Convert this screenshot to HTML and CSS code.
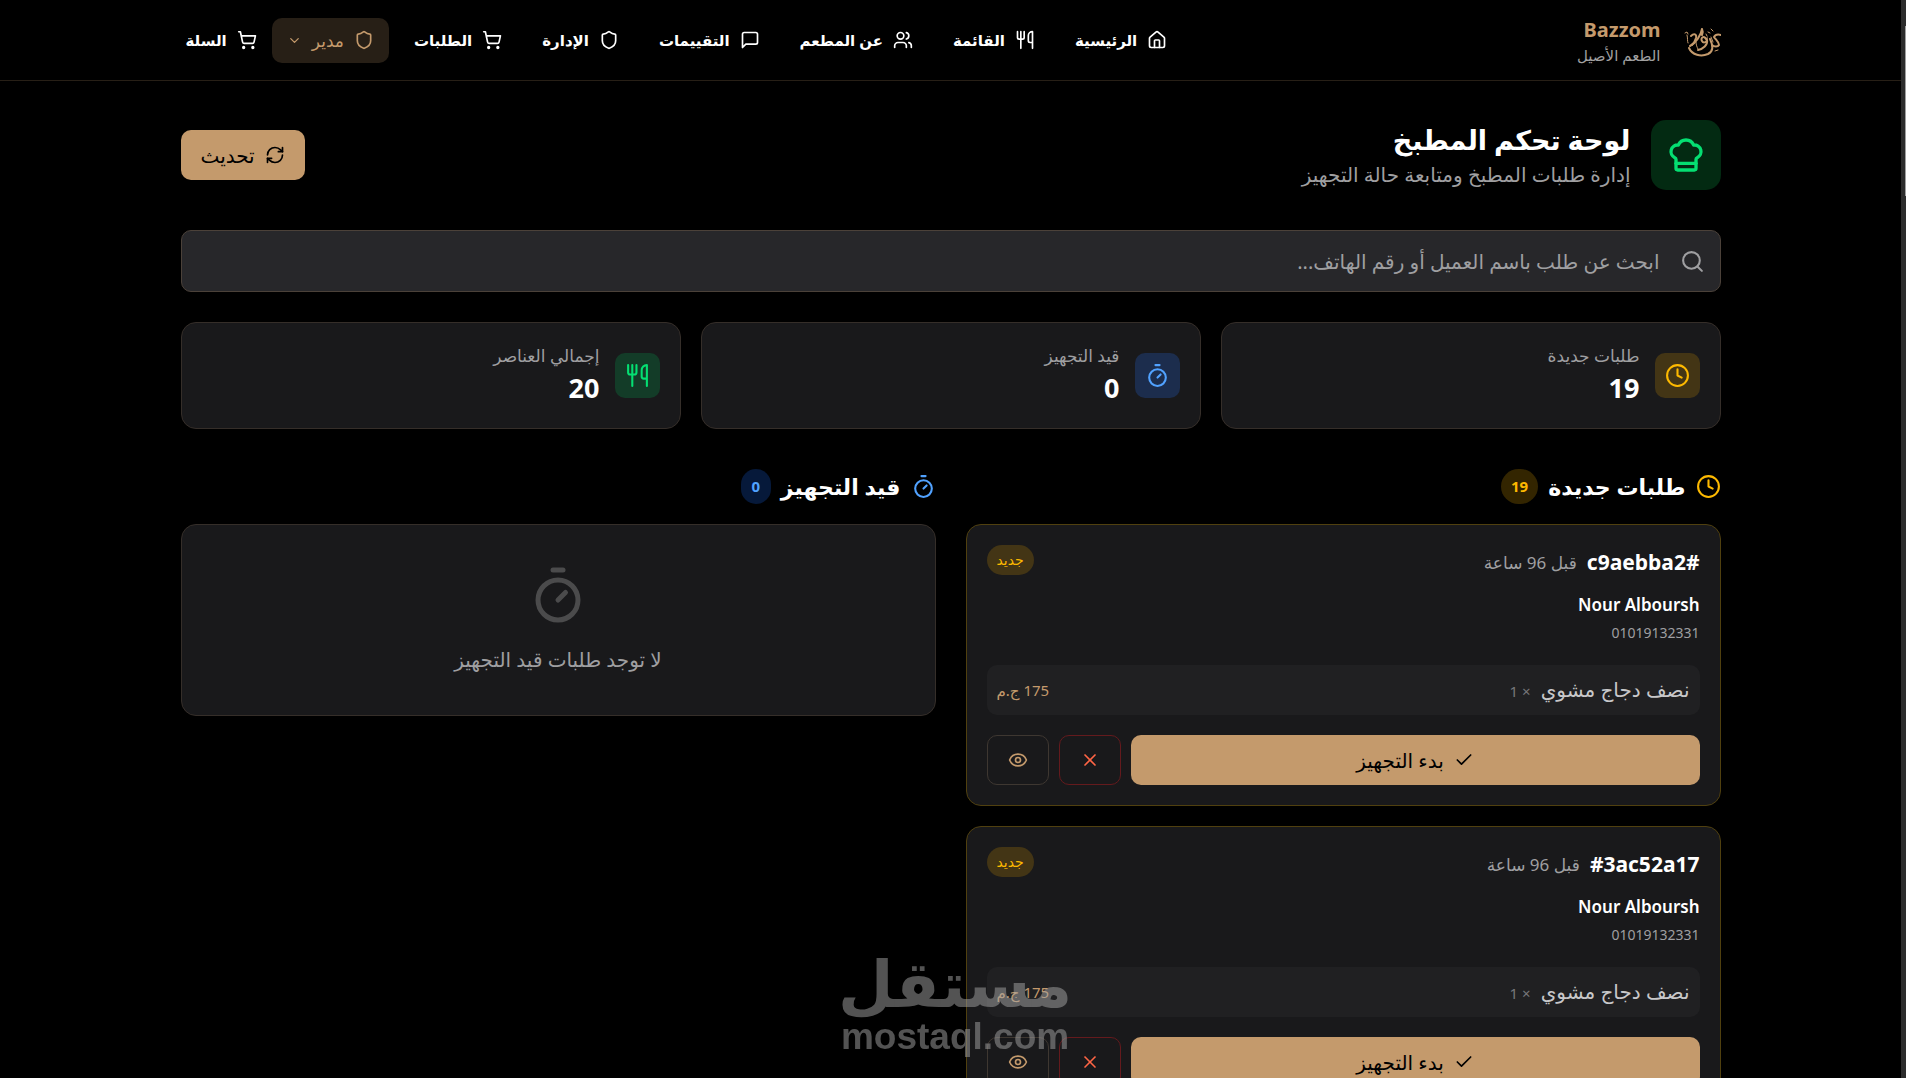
FILE: index.html
```html
<!DOCTYPE html>
<html lang="ar" dir="rtl">
<head>
  <meta charset="UTF-8">
  <meta name="viewport" content="width=device-width, initial-scale=1">
  <title>Bazzom - لوحة تحكم المطبخ</title>
  <link rel="stylesheet" href="styles.css">
</head>

<body>
<!-- icon sprite -->
<svg class="sprite" aria-hidden="true">
  <symbol id="i-home" viewBox="0 0 24 24"><path d="M15 21v-8a1 1 0 0 0-1-1h-4a1 1 0 0 0-1 1v8"/><path d="M3 10a2 2 0 0 1 .709-1.528l7-6a2 2 0 0 1 2.582 0l7 6A2 2 0 0 1 21 10v9a2 2 0 0 1-2 2H5a2 2 0 0 1-2-2z"/></symbol>
  <symbol id="i-utensils" viewBox="0 0 24 24"><path d="M3 2v7c0 1.1.9 2 2 2h4a2 2 0 0 0 2-2V2"/><path d="M7 2v20"/><path d="M21 15V2a5 5 0 0 0-5 5v6c0 1.1.9 2 2 2h3Zm0 0v7"/></symbol>
  <symbol id="i-users" viewBox="0 0 24 24"><path d="M16 21v-2a4 4 0 0 0-4-4H6a4 4 0 0 0-4 4v2"/><circle cx="9" cy="7" r="4"/><path d="M22 21v-2a4 4 0 0 0-3-3.87"/><path d="M16 3.13a4 4 0 0 1 0 7.75"/></symbol>
  <symbol id="i-message" viewBox="0 0 24 24"><path d="M21 15a2 2 0 0 1-2 2H7l-4 4V5a2 2 0 0 1 2-2h14a2 2 0 0 1 2 2z"/></symbol>
  <symbol id="i-shield" viewBox="0 0 24 24"><path d="M20 13c0 5-3.5 7.5-7.66 8.95a1 1 0 0 1-.67-.01C7.5 20.5 4 18 4 13V6a1 1 0 0 1 1-1c2 0 4.500-1.200 6.240-2.720a1.170 1.170 0 0 1 1.520 0C14.510 3.810 17 5 19 5a1 1 0 0 1 1 1z"/></symbol>
  <symbol id="i-cart" viewBox="0 0 24 24"><circle cx="8" cy="21" r="1"/><circle cx="19" cy="21" r="1"/><path d="M2.050 2.050h2l2.660 12.420a2 2 0 0 0 2 1.580h9.780a2 2 0 0 0 1.950-1.570l1.650-7.430H5.120"/></symbol>
  <symbol id="i-chevron" viewBox="0 0 24 24"><path d="m6 9 6 6 6-6"/></symbol>
  <symbol id="i-chef" viewBox="0 0 24 24"><path d="M17 21a1 1 0 0 0 1-1v-5.350c0-.457.316-.844.727-1.041a4 4 0 0 0-2.134-7.589 5 5 0 0 0-9.186 0 4 4 0 0 0-2.134 7.588c.411.198.727.585.727 1.041V20a1 1 0 0 0 1 1Z"/><path d="M6 17h12"/></symbol>
  <symbol id="i-refresh" viewBox="0 0 24 24"><path d="M3 12a9 9 0 0 1 9-9 9.750 9.750 0 0 1 6.740 2.740L21 8"/><path d="M21 3v5h-5"/><path d="M21 12a9 9 0 0 1-9 9 9.750 9.750 0 0 1-6.740-2.740L3 16"/><path d="M8 16H3v5"/></symbol>
  <symbol id="i-search" viewBox="0 0 24 24"><circle cx="11" cy="11" r="8"/><path d="m21 21-4.300-4.300"/></symbol>
  <symbol id="i-clock" viewBox="0 0 24 24"><circle cx="12" cy="12" r="10"/><path d="M12 6v6l4 2"/></symbol>
  <symbol id="i-timer" viewBox="0 0 24 24"><path d="M10 2h4"/><path d="m12 14 3-3"/><circle cx="12" cy="14" r="8"/></symbol>
  <symbol id="i-check" viewBox="0 0 24 24"><path d="M20 6 9 17l-5-5"/></symbol>
  <symbol id="i-x" viewBox="0 0 24 24"><path d="M18 6 6 18"/><path d="m6 6 12 12"/></symbol>
  <symbol id="i-eye" viewBox="0 0 24 24"><path d="M2.060 12.350a1 1 0 0 1 0-.700 10.750 10.750 0 0 1 19.880 0 1 1 0 0 1 0 .700 10.750 10.750 0 0 1-19.880 0"/><circle cx="12" cy="12" r="3"/></symbol>
</svg>

<header class="header">
  <div class="container header-row">
    <a class="brand" href="#">
      <svg class="brand-mark" viewBox="0 0 50 50" aria-hidden="true">
        <path d="M14 18l2-1 1 2M16 20c1 3 0 6 1 8M40 14l2 2M37 17l2 1M35 19l1 2M44 36l3-1"/>
        <path class="thick" d="M31 14c-1 6-6 14-12 17M31 14c1 2 1 4 0 6"/>
        <path class="thick" d="M20 21c3-3 6-2 5 2-1 3-2 5-4 7"/>
        <path class="thick" d="M35 24c-2-4-6-1-4 2 1 2 4 2 5-1 1 5-4 9-9 10"/>
        <path class="thick" d="M18 33c3 7 12 9 19 6 6-3 5-9 2-15"/>
        <path class="thick" d="M50 20c-4-1-6 0-7 2 2 3 5 5 5 8-1 2-5 2-7 0"/>
        <path d="M25 27c0 3 1 5 2 7M40 22l2 5"/>
      </svg>
      <span class="brand-text">
        <strong>Bazzom</strong>
        <small>الطعم الأصيل</small>
      </span>
    </a>
    <nav class="nav">
      <a class="nav-item" href="#"><svg class="icon"><use href="#i-home"/></svg>الرئيسية</a>
      <a class="nav-item" href="#"><svg class="icon"><use href="#i-utensils"/></svg>القائمة</a>
      <a class="nav-item" href="#"><svg class="icon"><use href="#i-users"/></svg>عن المطعم</a>
      <a class="nav-item" href="#"><svg class="icon"><use href="#i-message"/></svg>التقييمات</a>
      <a class="nav-item" href="#"><svg class="icon"><use href="#i-shield"/></svg>الإدارة</a>
      <a class="nav-item" href="#"><svg class="icon"><use href="#i-cart"/></svg>الطلبات</a>
      <button class="nav-item role" type="button"><svg class="icon"><use href="#i-shield"/></svg>مدير<svg class="icon icon-xs"><use href="#i-chevron"/></svg></button>
      <a class="nav-item cart" href="#"><svg class="icon"><use href="#i-cart"/></svg>السلة</a>
    </nav>
  </div>
</header>

<main class="container main">
  <div class="page-head">
    <div class="page-title">
      <span class="page-icon"><svg class="icon icon-xl"><use href="#i-chef"/></svg></span>
      <div>
        <h1>لوحة تحكم المطبخ</h1>
        <p>إدارة طلبات المطبخ ومتابعة حالة التجهيز</p>
      </div>
    </div>
    <button class="btn btn-gold" type="button"><svg class="icon"><use href="#i-refresh"/></svg>تحديث</button>
  </div>

  <label class="search">
    <svg class="icon icon-md"><use href="#i-search"/></svg>
    <input type="text" aria-label="بحث" placeholder="ابحث عن طلب باسم العميل أو رقم الهاتف...">
  </label>

  <section class="stats">
    <div class="stat yellow">
      <span class="stat-icon"><svg class="icon icon-md"><use href="#i-clock"/></svg></span>
      <div><p>طلبات جديدة</p><strong>19</strong></div>
    </div>
    <div class="stat blue">
      <span class="stat-icon"><svg class="icon icon-md"><use href="#i-timer"/></svg></span>
      <div><p>قيد التجهيز</p><strong>0</strong></div>
    </div>
    <div class="stat green">
      <span class="stat-icon"><svg class="icon icon-md"><use href="#i-utensils"/></svg></span>
      <div><p>إجمالي العناصر</p><strong>20</strong></div>
    </div>
  </section>

  <div class="columns">
    <section class="column">
      <div class="column-head yellow">
        <svg class="icon icon-md"><use href="#i-clock"/></svg>
        <h2>طلبات جديدة</h2>
        <span class="count">19</span>
      </div>

      <article class="order">
        <div class="order-top">
          <div class="order-id"><h3>#c9aebba2</h3><span>قبل 96 ساعة</span></div>
          <span class="tag">جديد</span>
        </div>
        <div class="customer">
          <p class="customer-name">Nour Alboursh</p>
          <p class="customer-phone">01019132331</p>
        </div>
        <div class="line">
          <div class="line-name">نصف دجاج مشوي <span>× 1</span></div>
          <span class="price">175 ج.م</span>
        </div>
        <div class="actions">
          <button class="btn btn-gold start" type="button"><svg class="icon"><use href="#i-check"/></svg>بدء التجهيز</button>
          <button class="btn btn-square danger" type="button" aria-label="إلغاء"><svg class="icon"><use href="#i-x"/></svg></button>
          <button class="btn btn-square" type="button" aria-label="عرض"><svg class="icon"><use href="#i-eye"/></svg></button>
        </div>
      </article>

      <article class="order">
        <div class="order-top">
          <div class="order-id"><h3>#3ac52a17</h3><span>قبل 96 ساعة</span></div>
          <span class="tag">جديد</span>
        </div>
        <div class="customer">
          <p class="customer-name">Nour Alboursh</p>
          <p class="customer-phone">01019132331</p>
        </div>
        <div class="line">
          <div class="line-name">نصف دجاج مشوي <span>× 1</span></div>
          <span class="price">175 ج.م</span>
        </div>
        <div class="actions">
          <button class="btn btn-gold start" type="button"><svg class="icon"><use href="#i-check"/></svg>بدء التجهيز</button>
          <button class="btn btn-square danger" type="button" aria-label="إلغاء"><svg class="icon"><use href="#i-x"/></svg></button>
          <button class="btn btn-square" type="button" aria-label="عرض"><svg class="icon"><use href="#i-eye"/></svg></button>
        </div>
      </article>
    </section>

    <section class="column">
      <div class="column-head blue">
        <svg class="icon icon-md"><use href="#i-timer"/></svg>
        <h2>قيد التجهيز</h2>
        <span class="count">0</span>
      </div>
      <div class="empty">
        <svg class="icon icon-xxl"><use href="#i-timer"/></svg>
        <p>لا توجد طلبات قيد التجهيز</p>
      </div>
    </section>
  </div>
</main>

<div class="watermark">
  <span class="watermark-ar">مستقل</span>
  <span class="watermark-en">mostaql.com</span>
</div>
<div class="scrollbar"><span></span></div>
</body>

</html>
```
FILE: styles.css
```css
:root {
    --gold: #c49a6c;
    --card: #19191b;
    --border: #352e29;
    --muted: #9f9fa1;
}
* {
    box-sizing: border-box;
    margin: 0;
    padding: 0;
}
html {
    background: #000;
    scrollbar-width: none;
}
body {
    padding-right: 5px;
    background: #000;
    color: #fff;
    font-family: "Noto Sans", "DejaVu Sans", sans-serif;
    font-size: 20px;
    line-height: 25px;
}
button, input {
    font: inherit;
    color: inherit;
}
button {
    cursor: pointer;
}
a {
    color: inherit;
    text-decoration: none;
}
.sprite {
    display: none;
}
.container {
    max-width: 1600px;
    margin: 0 auto;
    padding: 0 30px;
}

/* icons */
.icon {
    flex: none;
    width: 20px;
    height: 20px;
    fill: none;
    stroke: currentColor;
    stroke-width: 2;
    stroke-linecap: round;
    stroke-linejoin: round;
}
.icon-xs { width: 15px; height: 15px; }
.icon-md { width: 25px; height: 25px; }
.icon-xl { width: 40px; height: 40px; }
.icon-xxl { width: 60px; height: 60px; }

/* header */
.header {
    border-bottom: 1px solid #271f16;
}
.header-row {
    display: flex;
    align-items: center;
    justify-content: space-between;
    height: 80px;
}
.brand {
    display: flex;
    align-items: center;
    gap: 10px;
}
.brand-mark {
    width: 50px;
    height: 50px;
    fill: none;
    stroke: var(--gold);
    stroke-width: 1;
    stroke-linecap: round;
}
.brand-mark .thick {
    stroke-width: 2;
}
.brand-text {
    display: flex;
    flex-direction: column;
}
.brand-text strong {
    color: var(--gold);
    font-size: 20px;
    line-height: 30px;
}
.brand-text small {
    color: #a1a1a1;
    font-size: 15px;
    line-height: 20px;
}
.nav {
    display: flex;
    align-items: center;
    gap: 10px;
}
.nav-item {
    display: flex;
    align-items: center;
    gap: 10px;
    height: 45px;
    padding: 0 15px;
    font-size: 15px;
    font-weight: 700;
}
.nav-item.role {
    border: 0;
    border-radius: 10px;
    background: #271f16;
    color: var(--gold);
    font-size: 17px;
    font-weight: 400;
}
.nav-item.cart {
    padding: 0 5px;
}

/* page head */
.main {
    padding-top: 39px;
    padding-bottom: 40px;
}
.page-head {
    display: flex;
    align-items: center;
    justify-content: space-between;
    margin-bottom: 40px;
}
.page-title {
    display: flex;
    align-items: center;
    gap: 20px;
}
.page-icon {
    display: flex;
    padding: 15px;
    border-radius: 15px;
    background: #032a12;
    color: #05df72;
}
.page-title h1 {
    font-size: 27px;
    line-height: 40px;
}
.page-title p {
    color: var(--muted);
    line-height: 30px;
}
.btn {
    display: flex;
    align-items: center;
    justify-content: center;
    gap: 10px;
    height: 50px;
    padding: 0 20px;
    border: 0;
    border-radius: 10px;
    background: none;
}
.btn-gold {
    background: var(--gold);
    color: #000;
}

/* search */
.search {
    display: flex;
    align-items: center;
    gap: 20px;
    height: 62px;
    margin-bottom: 30px;
    padding: 0 15px;
    border: 1px solid #4b4139;
    border-radius: 10px;
    background: #27272a;
    color: var(--muted);
}
.search input {
    flex: 1;
    border: 0;
    outline: 0;
    background: none;
}
.search input::placeholder {
    color: var(--muted);
}

/* stats */
.yellow { --tone: #fdb900; --tile: #433515; --badge: #332500; }
.blue { --tone: #51a2ff; --tile: #1c2d4d; --badge: #06193a; }
.green { --tone: #05df72; --tile: #133c28; --badge: #032a12; }
.stats {
    display: grid;
    grid-template-columns: repeat(3, 1fr);
    gap: 20px;
    margin-bottom: 40px;
}
.stat {
    display: flex;
    align-items: center;
    gap: 15px;
    padding: 20px;
    border: 1px solid var(--border);
    border-radius: 15px;
    background: var(--card);
}
.stat-icon {
    display: flex;
    padding: 10px;
    border-radius: 10px;
    background: var(--tile);
    color: var(--tone);
}
.stat p {
    color: var(--muted);
    font-size: 17px;
}
.stat strong {
    display: block;
    font-size: 27px;
    line-height: 40px;
}

/* columns */
.columns {
    display: grid;
    grid-template-columns: 1fr 1fr;
    align-items: start;
    gap: 30px;
}
.column {
    display: flex;
    flex-direction: column;
    gap: 20px;
}
.column-head {
    display: flex;
    align-items: center;
    gap: 10px;
    height: 35px;
    color: var(--tone);
}
.column-head h2 {
    color: #fff;
    font-size: 22px;
}
.count {
    min-width: 30px;
    padding: 5px 10px;
    border-radius: 20px;
    background: var(--badge);
    font-size: 15px;
    font-weight: 700;
    text-align: center;
}
.empty {
    display: flex;
    flex-direction: column;
    align-items: center;
    gap: 20px;
    padding: 40px;
    border: 1px solid var(--border);
    border-radius: 15px;
    background: var(--card);
    color: #4b4b4c;
}
.empty p {
    color: var(--muted);
    line-height: 30px;
}

/* order card */
.order {
    padding: 20px;
    border: 1px solid #50400f;
    border-radius: 15px;
    background: var(--card);
}
.order-top {
    display: flex;
    align-items: flex-start;
    justify-content: space-between;
    margin-bottom: 10px;
}
.order-id {
    display: flex;
    align-items: center;
    gap: 10px;
    height: 35px;
}
.order-id h3 {
    font-size: 21px;
}
.order-id span {
    color: var(--muted);
    font-size: 17px;
}
.tag {
    padding: 0 10px;
    border-radius: 15px;
    background: #433515;
    color: #fdb900;
    font-size: 14px;
    line-height: 30px;
}
.customer {
    margin-bottom: 20px;
}
.customer-name {
    font-size: 17px;
    font-weight: 600;
    line-height: 30px;
}
.customer-phone {
    color: var(--muted);
    font-size: 14px;
    line-height: 25px;
}
.line {
    display: flex;
    align-items: center;
    justify-content: space-between;
    height: 50px;
    margin-bottom: 20px;
    padding: 0 10px;
    border-radius: 10px;
    background: #202022;
    color: #c8c8ca;
}
.line-name span {
    margin-right: 5px;
    color: #77777a;
    font-size: 15px;
}
.price {
    color: var(--gold);
    font-size: 15px;
}
.actions {
    display: flex;
    gap: 10px;
}
.start {
    flex: 1;
}
.btn-square {
    border: 1px solid #3e3731;
    color: var(--gold);
}
.btn-square.danger {
    border-color: #641a1d;
    color: #ff6545;
}

/* overlays */
.watermark {
    position: fixed;
    left: 838px;
    bottom: 21px;
    display: flex;
    flex-direction: column;
    align-items: center;
    color: #a5a5a5;
    font-weight: 700;
    opacity: .5;
    pointer-events: none;
}
.watermark-ar {
    font-family: "DejaVu Sans", sans-serif;
    font-size: 64px;
    line-height: 64px;
}
.watermark-en {
    font-family: "Liberation Sans", sans-serif;
    font-size: 37px;
    line-height: 40px;
}
.scrollbar {
    position: fixed;
    top: 0;
    right: 0;
    bottom: 0;
    width: 5px;
    background: #2c2c2c;
}
.scrollbar span {
    position: absolute;
    top: 26px;
    right: 0;
    width: 1px;
    height: 170px;
    background: #9f9f9f;
}
```
